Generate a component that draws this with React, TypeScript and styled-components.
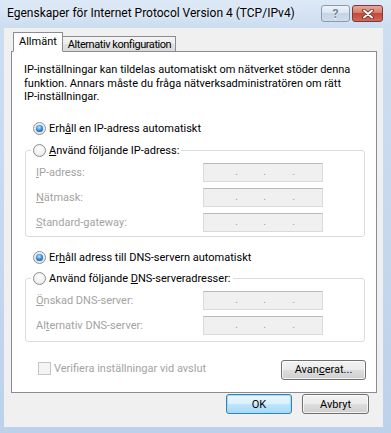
import React from 'react';
import styled, { createGlobalStyle, css } from 'styled-components';

const GlobalStyle = createGlobalStyle`
  html, body {
    margin: 0;
    padding: 0;
    background: #ffffff;
  }
`;

const FONT = `Roboto, 'Noto Sans', 'Liberation Sans', sans-serif`;
const DISABLED = '#a3a3a3';

const Window = styled.div`
  width: 391px;
  height: 433px;
  box-sizing: border-box;
  display: flex;
  flex-direction: column;
  padding: 0 8px 6px 4px;
  background: linear-gradient(180deg, #dde9f6 0px, #cddef1 26px, #c3d7ed 60%, #bcd2ea 100%);
  font-family: ${FONT};
  font-size: 11px;
  color: #000;
`;

const TitleBar = styled.div`
  height: 28px;
  flex: none;
  display: flex;
  justify-content: space-between;
  align-items: flex-start;
`;

const Caption = styled.div`
  padding: 6px 0 0 3px;
  font-size: 12px;
  color: #000;
  text-shadow: 0 0 6px rgba(255, 255, 255, 0.9);
`;

const CaptionButtons = styled.div`
  display: flex;
  gap: 2px;
  margin-top: 5px;
`;

const CaptionButton = styled.div<{ $kind: 'help' | 'close' }>`
  height: 17px;
  box-sizing: border-box;
  border-radius: 3px;
  display: flex;
  align-items: center;
  justify-content: center;
  ${p =>
    p.$kind === 'help'
      ? css`
          width: 29px;
          border: 1px solid #8a9cb4;
          background: linear-gradient(180deg, #eef3f9 0%, #dbe5f1 45%, #c5d4e6 50%, #cfdceb 100%);
          color: #7386a0;
          font-weight: bold;
          font-size: 12px;
          text-shadow: 0 1px 0 #fff;
        `
      : css`
          width: 31px;
          border: 1px solid #7a3a35;
          background: linear-gradient(180deg, #e9a99c 0%, #d9786a 45%, #c4483a 50%, #d0685a 100%);
        `}
`;

const Client = styled.div`
  flex: 1;
  display: flex;
  flex-direction: column;
  background: #f0f0f0;
  padding: 4px 6px 0 7px;
`;

const TabStrip = styled.div`
  display: flex;
  align-items: flex-end;
  padding-left: 2px;
  margin-bottom: -1px;
  position: relative;
  z-index: 1;
`;

const Tab = styled.div<{ $active?: boolean }>`
  box-sizing: border-box;
  border: 1px solid #898c95;
  display: flex;
  align-items: center;
  ${p =>
    p.$active
      ? css`
          height: 20px;
          padding: 0 5px 2px 5px;
          background: #ffffff;
          border-bottom-color: #ffffff;
        `
      : css`
          height: 16px;
          padding: 0 4px 0 5px;
          border-left: none;
          letter-spacing: -0.45px;
          background: linear-gradient(180deg, #f4f4f4 0%, #ececec 50%, #e2e2e2 51%, #dadada 100%);
        `}
`;

const Panel = styled.div`
  height: 342px;
  box-sizing: border-box;
  flex: none;
  background: #ffffff;
  border: 1px solid #898c95;
  padding: 11px 11px 0 12px;
  display: flex;
  flex-direction: column;
`;

const Intro = styled.p`
  margin: 0;
  line-height: 13.5px;
`;

const RadioRow = styled.label`
  display: flex;
  align-items: center;
  gap: 3px;
  height: 17px;
  color: #000;
`;

const OptionRow = styled(RadioRow)<{ $top: number }>`
  padding-left: 9px;
  margin-top: ${p => p.$top}px;
`;

const RadioDot = styled.span<{ $checked?: boolean }>`
  width: 13px;
  height: 13px;
  box-sizing: border-box;
  border-radius: 50%;
  border: 1px solid #8e8f8f;
  background: radial-gradient(circle at 50% 40%, #ffffff 0%, #f0f0f0 60%, #d4d4d4 100%);
  display: flex;
  align-items: center;
  justify-content: center;
  flex: none;
  ${p =>
    p.$checked &&
    css`
      &::after {
        content: '';
        width: 7px;
        height: 7px;
        border-radius: 50%;
        background: radial-gradient(circle at 45% 35%, #b8ecff 0%, #3d93d8 45%, #0d3f86 100%);
        box-shadow: 0 0 1px #1c5ea8;
      }
    `}
`;

const Group = styled.fieldset<{ $top: number; $bottom: number }>`
  margin: ${p => p.$top}px 0 0 1px;
  padding: 0 10px ${p => p.$bottom}px 10px;
  border: 1px solid #dadde0;
  border-radius: 3px;
  min-width: 0;
`;

const GroupLegend = styled.legend`
  margin-left: -5px;
  padding: 0 2px;
`;

const Field = styled.div`
  display: grid;
  grid-template-columns: 167px 120px;
  align-items: center;
  margin-top: 4px;
  & + & {
    margin-top: 6px;
  }
  color: ${DISABLED};
`;

const AddressBox = styled.div`
  height: 19px;
  box-sizing: border-box;
  border: 1px solid #dadada;
  border-top-color: #b9b9b9;
  background: #f0f0f0;
  display: grid;
  grid-template-columns: 35px 28px 29px 1fr;
  align-items: center;
`;

const Octet = styled.span`
  text-align: right;
  color: #9a9a9a;
  font-size: 10px;
  line-height: 1;
  padding-right: 1px;
`;

const Key = styled.span`
  text-decoration: underline;
`;

const BottomRow = styled.div`
  display: flex;
  justify-content: space-between;
  align-items: flex-start;
  margin-top: 15px;
`;

const CheckRow = styled.label`
  display: flex;
  align-items: center;
  gap: 3px;
  height: 17px;
  margin-top: 3px;
  padding-left: 14px;
  color: ${DISABLED};
`;

const CheckBox = styled.span`
  width: 13px;
  height: 13px;
  box-sizing: border-box;
  border: 1px solid #c5c5c5;
  background: #f4f4f4;
`;

const Button = styled.button<{ $width: number; $default?: boolean }>`
  width: ${p => p.$width}px;
  height: 20px;
  box-sizing: border-box;
  padding: 0;
  border-radius: 3px;
  border: 1px solid #707070;
  background: linear-gradient(180deg, #f2f2f2 0%, #ebebeb 50%, #dddddd 51%, #cfcfcf 100%);
  box-shadow: inset 0 0 0 1px rgba(255, 255, 255, 0.75);
  font-family: ${FONT};
  font-size: 11px;
  color: #000;
  ${p =>
    p.$default &&
    css`
      border-color: #3c7fb1;
      box-shadow: inset 0 0 0 1px #9fdcf6;
      background: linear-gradient(180deg, #eaf6fd 0%, #d9f0fc 50%, #bee6fd 51%, #a7d9f5 100%);
    `}
`;

const AdvancedButton = styled(Button)`
  margin: 3px -1px 0 0;
`;

const ButtonRow = styled.div`
  display: flex;
  justify-content: flex-end;
  gap: 10px;
  padding: 1px 8px 0 0;
`;

const CloseGlyph = () => (
  <svg width="12" height="10" viewBox="0 0 12 10">
    <path d="M2 1.5 L10 8.5 M10 1.5 L2 8.5" stroke="#5a2a26" strokeWidth="3.6" strokeLinecap="round" />
    <path d="M2 1.5 L10 8.5 M10 1.5 L2 8.5" stroke="#ffffff" strokeWidth="2" strokeLinecap="round" />
  </svg>
);

const Address = () => (
  <AddressBox>
    <Octet>.</Octet>
    <Octet>.</Octet>
    <Octet>.</Octet>
    <span />
  </AddressBox>
);

export default function App() {
  return (
    <>
      <GlobalStyle />
      <Window>
        <TitleBar>
          <Caption>Egenskaper för Internet Protocol Version 4 (TCP/IPv4)</Caption>
          <CaptionButtons>
            <CaptionButton $kind="help">?</CaptionButton>
            <CaptionButton $kind="close">
              <CloseGlyph />
            </CaptionButton>
          </CaptionButtons>
        </TitleBar>
        <Client>
          <TabStrip>
            <Tab $active>Allmänt</Tab>
            <Tab>Alternativ konfiguration</Tab>
          </TabStrip>
          <Panel>
            <Intro>
              IP-inställningar kan tildelas automatiskt om nätverket stöder denna
              <br />
              funktion. Annars måste du fråga nätverksadministratören om rätt
              <br />
              IP-inställningar.
            </Intro>

            <OptionRow $top={16}>
              <RadioDot $checked />
              <span>
                Erh<Key>å</Key>ll en IP-adress automatiskt
              </span>
            </OptionRow>

            <Group $top={5} $bottom={4}>
              <GroupLegend>
                <RadioRow>
                  <RadioDot />
                  <span>
                    <Key>A</Key>nvänd följande IP-adress:
                  </span>
                </RadioRow>
              </GroupLegend>
              <Field>
                <span>
                  <Key>I</Key>P-adress:
                </span>
                <Address />
              </Field>
              <Field>
                <span>
                  <Key>N</Key>ätmask:
                </span>
                <Address />
              </Field>
              <Field>
                <span>
                  <Key>S</Key>tandard-gateway:
                </span>
                <Address />
              </Field>
            </Group>

            <OptionRow $top={12}>
              <RadioDot $checked />
              <span>
                Er<Key>h</Key>åll adress till DNS-servern automatiskt
              </span>
            </OptionRow>

            <Group $top={4} $bottom={6}>
              <GroupLegend>
                <RadioRow>
                  <RadioDot />
                  <span>
                    Använd följande <Key>D</Key>NS-serveradresser:
                  </span>
                </RadioRow>
              </GroupLegend>
              <Field>
                <span>
                  <Key>Ö</Key>nskad DNS-server:
                </span>
                <Address />
              </Field>
              <Field>
                <span>
                  Al<Key>t</Key>ernativ DNS-server:
                </span>
                <Address />
              </Field>
            </Group>

            <BottomRow>
              <CheckRow>
                <CheckBox />
                <span>Verifiera inställningar vid avslut</span>
              </CheckRow>
              <AdvancedButton $width={85}>
                Avan<Key>c</Key>erat...
              </AdvancedButton>
            </BottomRow>
          </Panel>
          <ButtonRow>
            <Button $width={66} $default>
              OK
            </Button>
            <Button $width={67}>Avbryt</Button>
          </ButtonRow>
        </Client>
      </Window>
    </>
  );
}
